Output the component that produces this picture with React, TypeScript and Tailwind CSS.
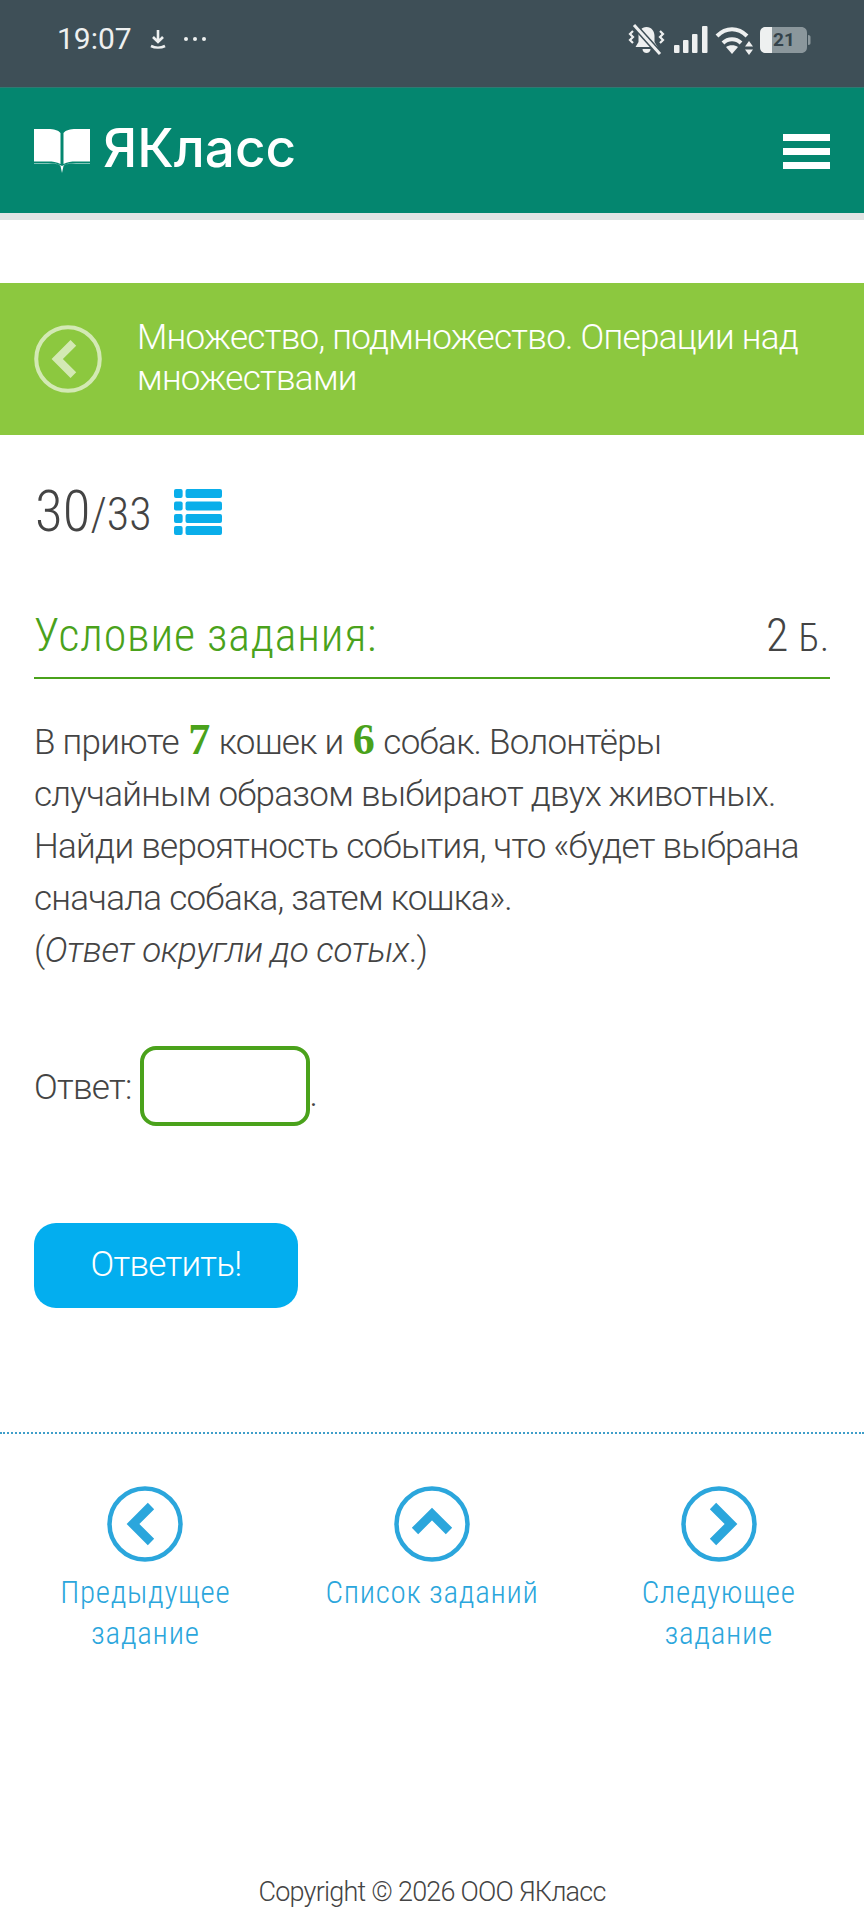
const F = { fontFamily: 'Roboto, sans-serif' };

function BackCircle({ color, kind, size = 76 }: { color: string; kind: 'l' | 'r' | 'u'; size?: number }) {
  const d = kind === 'l' ? 'M44 20 L26 38 L44 56' : kind === 'r' ? 'M32 20 L50 38 L32 56' : 'M21 45 L38 28 L55 45';
  return (
    <svg width={size} height={size} viewBox="0 0 76 76">
      <circle cx="38" cy="38" r="35.5" fill="none" stroke={color} strokeWidth="4.5" />
      <path d={d} fill="none" stroke={color} strokeWidth="9" />
    </svg>
  );
}

function StatusIcons() {
  return (
    <svg width="190" height="36" viewBox="0 0 190 36" className="block">
      <g fill="#eef0f0">
        <path d="M21.500 5c5 0 8 4 8 9v6l3 5H10.500l3-5v-6c0-5 3-9 8-9z" />
        <path d="M17.500 27h8c0 2.500-2 4-4 4s-4-1.500-4-4z" />
        <path d="M8 9l-3 3 3 3-3 3 3 3M35 9l3 3-3 3 3 3-3 3" fill="none" stroke="#eef0f0" strokeWidth="2.200" />
      </g>
      <path d="M9 3l26 29" stroke="#3e4f57" strokeWidth="6" />
      <path d="M9 3l26 29" stroke="#eef0f0" strokeWidth="3" />
      <g fill="#eef0f0">
        <rect x="49" y="23" width="5.500" height="8" rx="1" />
        <rect x="58" y="18" width="5.500" height="13" rx="1" />
        <rect x="67" y="12" width="5.500" height="19" rx="1" />
        <rect x="77" y="4" width="5.500" height="27" rx="1" />
      </g>
      <path d="M92 14c9-9 21-9 30 0M98 21c5-5 13-5 18 0" fill="none" stroke="#eef0f0" strokeWidth="4" />
      <path d="M101 25c3-2.500 9-2.500 12 0l-6 7z" fill="#eef0f0" />
      <path d="M124 19l4 5.500h-8zM124 33l4-5.500h-8z" fill="#eef0f0" />
      <path d="M141 5h35c4 0 6 2.500 6 6v14c0 3.500-2 6-6 6h-35c-4 0-6-2.500-6-6V11c0-3.500 2-6 6-6z" fill="#8b979c" />
      <path d="M141 5h6v26h-6c-4 0-6-2.500-6-6V11c0-3.500 2-6 6-6z" fill="#eef0f0" />
      <path d="M183 13c2 0 2.500 1 2.500 2v6c0 1-.5 2-2.500 2z" fill="#8b979c" />
    </svg>
  );
}

const numeral = { fontFamily: '"Liberation Serif", serif' };

export default function App() {
  return (
    <div className="w-[864px] h-[1920px] bg-white flex flex-col overflow-hidden font-light text-[#444444]" style={F}>
      <div className="h-[87px] bg-[#3e4f57] flex items-start justify-between pl-[57px] pr-[49px] text-[#eef0f0]">
        <div className="flex items-center pt-[24px]">
          <span className="text-[30px] leading-[30px] font-normal">19:07</span>
          <svg width="20" height="22" viewBox="0 0 20 22" className="ml-[16px]">
            <path d="M10 2v11M5 9l5 5 5-5M3 18c4 2 10 2 14 0" fill="none" stroke="#eef0f0" strokeWidth="2.600" />
          </svg>
          <span className="flex gap-[5px] ml-[16px]">
            <span className="w-[4px] h-[4px] rounded-full bg-[#eef0f0]" />
            <span className="w-[4px] h-[4px] rounded-full bg-[#eef0f0]" />
            <span className="w-[4px] h-[4px] rounded-full bg-[#eef0f0]" />
          </span>
        </div>
        <div className="relative pt-[22px]">
          <StatusIcons />
          <span className="absolute left-[148px] top-[28px] text-[19px] leading-[24px] font-bold text-[#33424a]">21</span>
        </div>
      </div>
      <div className="h-[126px] bg-[#04866f] flex items-center justify-between pl-[34px] pr-[34px] text-white border-t border-[#2f7a73]">
        <div className="flex items-center">
          <svg width="56" height="44" viewBox="0 0 56 44" className="mt-[1px]">
            <path d="M0 0h14c6 0 10 1 12.500 4v31c-4-2-8-2.500-12-2.500H0zM56 0H42c-6 0-10 1-12.500 4v31c4-2 8-2.500 12-2.500H56zM0 34.500h14c6 0 11 .5 12.500 2.500L28 44l1.500-7c1.500-2 6.500-2.500 12.500-2.500h14V34H42c-6 0-11 1-14 3-3-2-8-3-14-3H0z" fill="#fff" />
          </svg>
          <span className="ml-[13px] text-[53px] leading-[56px] font-medium -mt-[5px]" style={{ fontFamily: 'Inter, sans-serif' }}>ЯКласс</span>
        </div>
        <div className="flex flex-col gap-[7px] mt-[2px]">
          <span className="w-[47px] h-[7px] bg-white" />
          <span className="w-[47px] h-[7px] bg-white" />
          <span className="w-[47px] h-[7px] bg-white" />
        </div>
      </div>
      <div className="h-[7px] bg-[#e2e4e4]" />
      <div className="h-[63px]" />
      <div className="h-[152px] bg-[#8cc83f] flex items-center pl-[34px] text-white">
        <BackCircle color="#d3e9b4" kind="l" size={68} />
        <div className="ml-[35px] text-[35px] leading-[41px] font-light w-[700px] -mt-[2px] tracking-[-0.7px]">Множество, подмножество. Операции над множествами</div>
      </div>
      <div className="pl-[35px] pt-[50px] flex items-center h-[104px] [font-stretch:85%]">
        <span className="text-[57px] leading-[68px] font-light">30</span>
        <span className="text-[46px] leading-[68px] font-light mt-[3px]">/33</span>
        <svg width="48" height="46" viewBox="0 0 50 46" preserveAspectRatio="none" className="ml-[22px] mt-[0px]" fill="#0aaeea">
          <rect x="0" y="0" width="9" height="9" rx="2" />
          <rect x="0" y="12.500" width="9" height="9" rx="2" />
          <rect x="0" y="25" width="9" height="9" rx="2" />
          <rect x="0" y="37" width="9" height="9" rx="2" />
          <rect x="12" y="0" width="38" height="9" rx="2" />
          <rect x="12" y="12.500" width="38" height="9" rx="2" />
          <rect x="12" y="25" width="38" height="9" rx="2" />
          <rect x="12" y="37" width="38" height="9" rx="2" />
        </svg>
      </div>
      <div className="mx-[34px] mt-[64px] border-b-2 border-[#4aa21b] flex justify-between items-baseline h-[76px] pt-[4px] [font-stretch:85%] tracking-[0.8px]">
        <span className="text-[46px] leading-[56px] font-light text-[#4aa21b]">Условие задания:</span>
        <span className="leading-[56px]"><span className="text-[46px] font-light">2</span><span className="text-[38px] font-light"> Б.</span></span>
      </div>
      <div className="mx-[34px] mt-[38px] text-[35px] leading-[52px] font-light tracking-[-0.72px]">
        В приюте <b className="mx-[1.5px] text-[44px] leading-[40px] font-bold text-[#4aa21b]" style={numeral}>7</b> кошек и <b className="mx-[1.5px] text-[44px] leading-[40px] font-bold text-[#4aa21b]" style={numeral}>6</b> собак. Волонтёры случайным образом выбирают двух животных. Найди вероятность события, что «будет выбрана сначала собака, затем кошка».
        <br />(<i className="tracking-[-0.4px]">Ответ округли до сотых</i>.)
      </div>
      <div className="mx-[34px] mt-[69px] flex items-center text-[35px] h-[80px] tracking-[-0.72px]">
        <span className="mt-[4px]">Ответ:</span>
        <span className="ml-[8px] w-[170px] h-[80px] rounded-[16px] border-4 border-[#4aa21b]" />
        <span className="self-end mb-[14px] leading-[34px]">.</span>
      </div>
      <div className="ml-[34px] mt-[97px] w-[264px] h-[85px] rounded-[22px] bg-[#03aeef] text-white text-[35px] flex items-center justify-center tracking-[-0.72px]">Ответить!</div>
      <div className="mt-[124px] border-t-2 border-dotted border-[#3f9ec9]" />
      <div className="grid grid-cols-3 px-[2px] pt-[52px] text-[#2ba6dc] text-[31px] leading-[41px] text-center [font-stretch:85%] tracking-[0.7px]">
        {[
          ['l', 'Предыдущее', 'задание'],
          ['u', 'Список заданий', ''],
          ['r', 'Следующее', 'задание'],
        ].map(([k, a, b]) => (
          <div key={a} className="flex flex-col items-center">
            <BackCircle color="#2ba6dc" kind={k as 'l' | 'r' | 'u'} />
            <div className="mt-[10px]">{a}</div>
            {b && <div>{b}</div>}
          </div>
        ))}
      </div>
      <div className="mt-auto pb-[10px] text-center text-[27px] leading-[36px] font-light tracking-[-0.77px]">Copyright © 2026 ООО ЯКласс</div>
    </div>
  );
}
